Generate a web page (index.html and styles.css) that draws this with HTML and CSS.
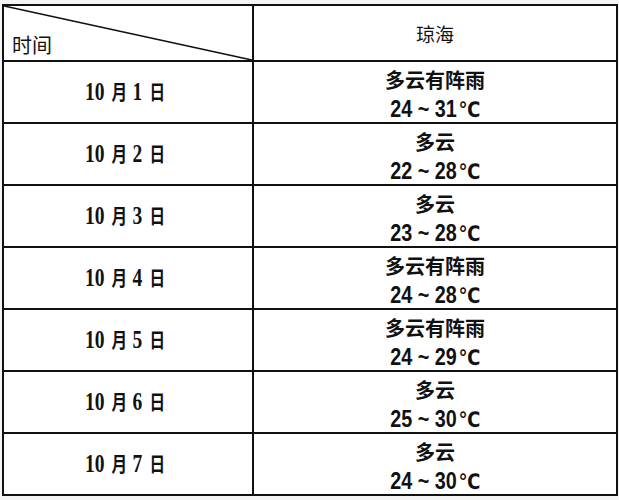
FILE: index.html
```html
<!DOCTYPE html>
<html lang="zh">
<head>
<meta charset="utf-8">
<link rel="stylesheet" href="styles.css">
<title>琼海天气</title>
</head>
<body>
<div class="table">
  <div class="cell head-left">
    <svg class="diag" width="100%" height="100%"><line x1="0" y1="0" x2="100%" y2="100%" stroke="#111" stroke-width="1.6"/></svg>
    <span class="time-label">时间</span>
  </div>
  <div class="cell head-right">琼海</div>

  <div class="cell date"><span class="d">10<span class="cj">月</span>1<span class="cj">日</span></span></div>
  <div class="cell wx"><div class="w">多云有阵雨</div><div class="t">24 ~ 31<span class="deg">℃</span></div></div>

  <div class="cell date"><span class="d">10<span class="cj">月</span>2<span class="cj">日</span></span></div>
  <div class="cell wx"><div class="w">多云</div><div class="t">22 ~ 28<span class="deg">℃</span></div></div>

  <div class="cell date"><span class="d">10<span class="cj">月</span>3<span class="cj">日</span></span></div>
  <div class="cell wx"><div class="w">多云</div><div class="t">23 ~ 28<span class="deg">℃</span></div></div>

  <div class="cell date"><span class="d">10<span class="cj">月</span>4<span class="cj">日</span></span></div>
  <div class="cell wx"><div class="w">多云有阵雨</div><div class="t">24 ~ 28<span class="deg">℃</span></div></div>

  <div class="cell date"><span class="d">10<span class="cj">月</span>5<span class="cj">日</span></span></div>
  <div class="cell wx"><div class="w">多云有阵雨</div><div class="t">24 ~ 29<span class="deg">℃</span></div></div>

  <div class="cell date"><span class="d">10<span class="cj">月</span>6<span class="cj">日</span></span></div>
  <div class="cell wx"><div class="w">多云</div><div class="t">25 ~ 30<span class="deg">℃</span></div></div>

  <div class="cell date"><span class="d">10<span class="cj">月</span>7<span class="cj">日</span></span></div>
  <div class="cell wx"><div class="w">多云</div><div class="t">24 ~ 30<span class="deg">℃</span></div></div>
</div>
</body>
</html>
```
FILE: styles.css
```css
html, body {
  margin: 0;
  padding: 0;
  background: #f4f4f4;
}
body {
  font-family: "Noto Sans CJK SC", "Liberation Sans", sans-serif;
  color: #111;
}
.table {
  margin: 4px 0 0 2px;
  width: 612px;
  background: #111;
  padding: 2px;
  display: grid;
  grid-template-columns: 248px 362px;
  grid-template-rows: 54px repeat(7, 60px);
  gap: 2px;
}
.cell {
  background: #fff;
  display: flex;
  align-items: center;
  justify-content: center;
}
.head-left {
  position: relative;
  justify-content: flex-start;
  align-items: flex-end;
}
.diag {
  position: absolute;
  left: 0;
  top: 0;
}
.time-label {
  font-size: 20px;
  line-height: 20px;
  padding: 0 0 5px 8px;
  font-weight: 400;
}
.head-right {
  font-size: 19px;
  font-weight: 400;
}
.d {
  display: inline-block;
  font-family: "Liberation Serif", "Noto Sans CJK SC", serif;
  font-weight: 700;
  font-size: 25px;
  line-height: 24px;
  transform: scaleX(0.78);
}
.cj {
  font-family: "Noto Sans CJK SC", sans-serif;
  font-size: 20px;
  margin: 0 7px 0 9px;
}
.wx {
  flex-direction: column;
  padding-top: 4px;
}
.w {
  font-size: 20px;
  font-weight: 700;
  line-height: 30px;
}
.t {
  font-family: "Liberation Sans", sans-serif;
  font-weight: 700;
  font-size: 23px;
  line-height: 28px;
  transform: scaleX(0.86);
}
.deg {
  font-family: "DejaVu Sans", "Liberation Sans", sans-serif;
  font-size: 21px;
  letter-spacing: -1px;
  margin-left: 2px;
}
```
